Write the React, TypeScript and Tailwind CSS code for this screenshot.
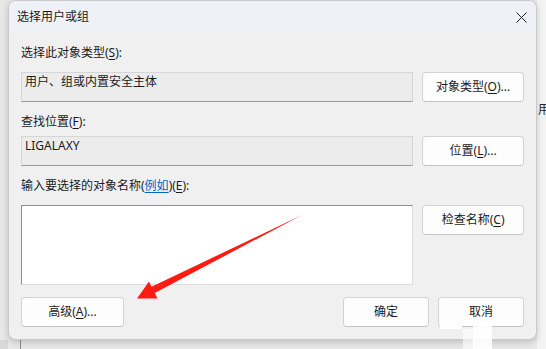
import React from "react";

const font = { fontFamily: '"Segoe UI", "Noto Sans", "Noto Sans CJK SC", sans-serif' };

function U({ children }: { children: React.ReactNode }) {
  return <span className="underline underline-offset-2">{children}</span>;
}

function Btn({ children, className = "" }: { children: React.ReactNode; className?: string }) {
  return (
    <div
      className={
        "flex h-[30px] items-center justify-center rounded-[4px] border border-[#d3d3d3] border-b-[#c4c4c4] bg-[#fdfdfd] text-[12px] text-[#1b1b1b] " +
        className
      }
    >
      {children}
    </div>
  );
}

export default function App() {
  return (
    <div className="relative h-[349px] w-[546px] overflow-hidden bg-[#e7e7e7]" style={font}>
      {/* background window fragments */}
      <div className="absolute left-[537px] top-0 h-[349px] w-[9px] bg-[#f3f3f3]" />
      <div className="absolute left-[538px] top-[104px] whitespace-nowrap text-[12px] leading-none text-[#222]">用(</div>
      <div className="absolute left-[20px] top-[340px] h-[9px] w-px bg-[#8a8a8a]" />
      <div className="absolute left-[0px] top-[340px] h-[9px] w-[8px] bg-[#d8d8d8]" />

      <div className="relative ml-[8px] flex h-[340px] w-[529px] flex-col overflow-hidden rounded-[8px] border border-[#c9c9c9] bg-[#f0f0f0] shadow-[0_2px_6px_rgba(0,0,0,0.18)]">
        {/* title bar */}
        <div className="flex h-[31px] shrink-0 items-center justify-between bg-[#eef2f7] pl-[8px] pr-[9px]">
          <span className="text-[12px] text-[#1b1b1b]">选择用户或组</span>
          <svg width="11" height="11" viewBox="0 0 11 11" className="mt-[1px]">
            <path d="M0.5 0.5 L10.5 10.5 M10.5 0.5 L0.5 10.5" stroke="#222" strokeWidth="1" />
          </svg>
        </div>

        <div className="flex flex-col pl-[12px] pr-[12px]">
          <div className="mt-[13px] h-[16px] text-[12px] leading-[16px] text-[#1b1b1b]">
            选择此对象类型(<U>S</U>):
          </div>
          <div className="mt-[11px] flex items-stretch gap-[9px]">
            <div className="h-[30px] w-[393px] border border-[#d6d6d6] border-b-[#9a9a9a] bg-[#ececec] pl-[3px] text-[12px] leading-[18px] text-[#1b1b1b]">
              用户、组或内置安全主体
            </div>
            <Btn className="w-[102px]">
              对象类型(<U>O</U>)...
            </Btn>
          </div>

          <div className="mt-[12px] h-[16px] text-[12px] leading-[16px] text-[#1b1b1b]">
            查找位置(<U>F</U>):
          </div>
          <div className="mt-[6px] flex items-stretch gap-[9px]">
            <div className="h-[30px] w-[393px] border border-[#d6d6d6] border-b-[#9a9a9a] bg-[#ececec] pl-[3px] text-[12px] leading-[18px] text-[#1b1b1b]">
              LIGALAXY
            </div>
            <Btn className="w-[102px]">
              位置(<U>L</U>)...
            </Btn>
          </div>

          <div className="mt-[12px] h-[16px] text-[12px] leading-[16px] text-[#1b1b1b]">
            输入要选择的对象名称(<span className="text-[#0066cc] underline underline-offset-2">例如</span>)(<U>E</U>):
          </div>
          <div className="mt-[11px] flex items-start gap-[9px]">
            <div className="h-[80px] w-[393px] border border-[#dcdcdc] border-l-[#8f8f8f] border-t-[#8f8f8f] bg-white" />
            <Btn className="w-[102px]">
              检查名称(<U>C</U>)
            </Btn>
          </div>

          <div className="mt-[12px] flex items-center">
            <Btn className="w-[103px]">
              高级(<U>A</U>)...
            </Btn>
            <div className="flex-1" />
            <Btn className="w-[86px]">确定</Btn>
            <Btn className="ml-[9px] w-[86px]">取消</Btn>
          </div>
        </div>
      </div>

      {/* watermark fragments */}
      <div className="absolute left-[440px] top-[323px] h-[6px] w-[22px] bg-white/90" />
      <div className="absolute left-[473px] top-[322px] h-[27px] w-[19px] bg-white/90" />
      <div className="absolute left-[463px] top-[329px] h-[20px] w-[12px] bg-white/60" />

      {/* red arrow */}
      <svg className="pointer-events-none absolute left-0 top-0" width="546" height="349" viewBox="0 0 546 349">
        <polygon
          points="302,215 154.7,293 157.5,298.5 137,298.5 149,281.5 151.5,286.8"
          fill="#ff1a12"
        />
      </svg>
    </div>
  );
}
